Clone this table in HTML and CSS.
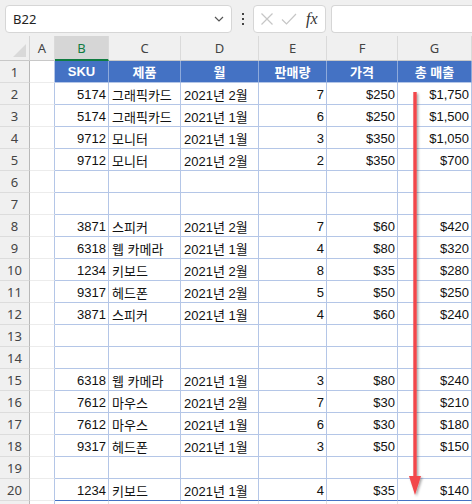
FILE: index.html
```html
<!DOCTYPE html>
<html lang="ko">
<head>
<meta charset="utf-8">
<link rel="stylesheet" href="styles.css">
</head>
<body>
<div class="app">
  <div class="toolbar">
    <div class="namebox">
      <span class="name">B22</span>
      <svg class="chev" width="10" height="6" viewBox="0 0 10 6"><path d="M1 1l4 4 4-4" fill="none" stroke="#555" stroke-width="1.2"/></svg>
    </div>
    <div class="dots"><i></i><i></i><i></i></div>
    <div class="fxbox">
      <svg width="14" height="14" viewBox="0 0 14 14"><path d="M1.5 1.5l11 11M12.5 1.5l-11 11" stroke="#c6c6c6" stroke-width="1.2"/></svg>
      <svg width="16" height="14" viewBox="0 0 16 14"><path d="M1 7.5l4.5 4.5L15 2" fill="none" stroke="#c6c6c6" stroke-width="1.2"/></svg>
      <span class="fx">fx</span>
    </div>
    <div class="formula"></div>
  </div>

  <div class="sheet">
    <div class="grid">
      <div class="corner"><span class="tri"></span></div>
      <div class="ch">A</div><div class="ch sel">B</div><div class="ch">C</div><div class="ch">D</div><div class="ch">E</div><div class="ch">F</div><div class="ch">G</div>

      <div class="rh">1</div><div class="a"></div>
      <div class="th">SKU</div><div class="th">제품</div><div class="th">월</div><div class="th">판매량</div><div class="th">가격</div><div class="th">총 매출</div>

      <div class="rh">2</div><div class="a"></div>
      <div class="c n">5174</div><div class="c t">그래픽카드</div><div class="c t">2021년 2월</div><div class="c n">7</div><div class="c n">$250</div><div class="c n">$1,750</div>

      <div class="rh">3</div><div class="a"></div>
      <div class="c n">5174</div><div class="c t">그래픽카드</div><div class="c t">2021년 1월</div><div class="c n">6</div><div class="c n">$250</div><div class="c n">$1,500</div>

      <div class="rh">4</div><div class="a"></div>
      <div class="c n">9712</div><div class="c t">모니터</div><div class="c t">2021년 1월</div><div class="c n">3</div><div class="c n">$350</div><div class="c n">$1,050</div>

      <div class="rh">5</div><div class="a"></div>
      <div class="c n">9712</div><div class="c t">모니터</div><div class="c t">2021년 2월</div><div class="c n">2</div><div class="c n">$350</div><div class="c n">$700</div>

      <div class="rh">6</div><div class="a"></div>
      <div class="c"></div><div class="c"></div><div class="c"></div><div class="c"></div><div class="c"></div><div class="c"></div>

      <div class="rh">7</div><div class="a"></div>
      <div class="c"></div><div class="c"></div><div class="c"></div><div class="c"></div><div class="c"></div><div class="c"></div>

      <div class="rh">8</div><div class="a"></div>
      <div class="c n">3871</div><div class="c t">스피커</div><div class="c t">2021년 2월</div><div class="c n">7</div><div class="c n">$60</div><div class="c n">$420</div>

      <div class="rh">9</div><div class="a"></div>
      <div class="c n">6318</div><div class="c t">웹 카메라</div><div class="c t">2021년 1월</div><div class="c n">4</div><div class="c n">$80</div><div class="c n">$320</div>

      <div class="rh">10</div><div class="a"></div>
      <div class="c n">1234</div><div class="c t">키보드</div><div class="c t">2021년 2월</div><div class="c n">8</div><div class="c n">$35</div><div class="c n">$280</div>

      <div class="rh">11</div><div class="a"></div>
      <div class="c n">9317</div><div class="c t">헤드폰</div><div class="c t">2021년 2월</div><div class="c n">5</div><div class="c n">$50</div><div class="c n">$250</div>

      <div class="rh">12</div><div class="a"></div>
      <div class="c n">3871</div><div class="c t">스피커</div><div class="c t">2021년 1월</div><div class="c n">4</div><div class="c n">$60</div><div class="c n">$240</div>

      <div class="rh">13</div><div class="a"></div>
      <div class="c"></div><div class="c"></div><div class="c"></div><div class="c"></div><div class="c"></div><div class="c"></div>

      <div class="rh">14</div><div class="a"></div>
      <div class="c"></div><div class="c"></div><div class="c"></div><div class="c"></div><div class="c"></div><div class="c"></div>

      <div class="rh">15</div><div class="a"></div>
      <div class="c n">6318</div><div class="c t">웹 카메라</div><div class="c t">2021년 1월</div><div class="c n">3</div><div class="c n">$80</div><div class="c n">$240</div>

      <div class="rh">16</div><div class="a"></div>
      <div class="c n">7612</div><div class="c t">마우스</div><div class="c t">2021년 2월</div><div class="c n">7</div><div class="c n">$30</div><div class="c n">$210</div>

      <div class="rh">17</div><div class="a"></div>
      <div class="c n">7612</div><div class="c t">마우스</div><div class="c t">2021년 1월</div><div class="c n">6</div><div class="c n">$30</div><div class="c n">$180</div>

      <div class="rh">18</div><div class="a"></div>
      <div class="c n">9317</div><div class="c t">헤드폰</div><div class="c t">2021년 1월</div><div class="c n">3</div><div class="c n">$50</div><div class="c n">$150</div>

      <div class="rh">19</div><div class="a"></div>
      <div class="c"></div><div class="c"></div><div class="c"></div><div class="c"></div><div class="c"></div><div class="c"></div>

      <div class="rh">20</div><div class="a"></div>
      <div class="c n last">1234</div><div class="c t last">키보드</div><div class="c t last">2021년 1월</div><div class="c n last">4</div><div class="c n last">$35</div><div class="c n last">$140</div>

      <div class="rh"></div><div class="a"></div>
      <div class="c e"></div><div class="c e"></div><div class="c e"></div><div class="c e"></div><div class="c e"></div><div class="c e"></div>
    </div>

    <svg class="arrow" width="30" height="420" viewBox="0 0 30 420">
      <defs>
        <filter id="sh" x="-50%" y="-5%" width="200%" height="110%">
          <feDropShadow dx="1.5" dy="1.5" stdDeviation="1.2" flood-color="#000" flood-opacity="0.35"/>
        </filter>
      </defs>
      <g filter="url(#sh)">
        <rect x="13.3" y="2" width="3.4" height="386" fill="#f2474b"/>
        <polygon points="9,386 21,386 15,405" fill="#f2474b"/>
      </g>
    </svg>
  </div>
</div>
</body>
</html>
```

FILE: styles.css
```css
* { box-sizing: border-box; }
html, body { margin: 0; padding: 0; }
body {
  width: 472px;
  height: 504px;
  overflow: hidden;
  background: #fff;
  font-family: "Liberation Sans", "Noto Sans CJK KR", sans-serif;
}
.app { width: 472px; height: 504px; overflow: hidden; }

.toolbar {
  height: 36px;
  background: #f0f0f0;
  display: flex;
  align-items: flex-start;
  padding: 5px 0 0 5px;
}
.namebox {
  width: 227px;
  height: 28px;
  background: #fff;
  border: 1px solid #d6d6d6;
  border-radius: 4px;
  display: flex;
  align-items: center;
  justify-content: space-between;
  padding: 0 7px 0 7px;
}
.name { font-family: "Noto Sans", "Liberation Sans", sans-serif; font-size: 13px; color: #222; }
.chev { margin-right: 0; }
.dots {
  width: 21px;
  height: 28px;
  display: flex;
  flex-direction: column;
  align-items: center;
  justify-content: center;
  gap: 3px;
}
.dots i { display: block; width: 2px; height: 2px; background: #444; }
.fxbox {
  width: 73px;
  height: 28px;
  background: #fff;
  border: 1px solid #d6d6d6;
  border-radius: 4px;
  display: flex;
  align-items: center;
  padding: 0 0 0 6px;
  gap: 7px;
}
.fx {
  font-family: "Liberation Serif", serif;
  font-style: italic;
  font-size: 16px;
  color: #333;
  margin-left: 2px;
}
.formula {
  flex: 1;
  height: 28px;
  margin-left: 5px;
  background: #fff;
  border: 1px solid #d6d6d6;
  border-right: none;
  border-radius: 4px 0 0 4px;
}

.sheet { position: relative; }
.grid {
  display: grid;
  grid-template-columns: 30px 25px 54px 72px 78px 68px 71px 74px;
  grid-template-rows: 25px repeat(21, 22px);
  font-size: 13px;
}
.corner {
  background: #f0f0f0;
  border-right: 1px solid #d4d4d4;
  border-bottom: 1px solid #c8c8c8;
  position: relative;
}
.tri {
  position: absolute;
  right: 3px;
  bottom: 3px;
  width: 0;
  height: 0;
  border-left: 13px solid transparent;
  border-bottom: 13px solid #d9d9d9;
}
.ch {
  background: #f0f0f0;
  border-right: 1px solid #dadada;
  border-bottom: 1px solid #c8c8c8;
  color: #444;
  display: flex;
  align-items: center;
  justify-content: center;
  font-family: "Noto Sans", "Liberation Sans", sans-serif;
  font-size: 13px;
}
.ch.sel {
  background: #d6d6d6;
  color: #107c41;
  border-bottom: 2px solid #107c41;
}
.rh {
  background: #f0f0f0;
  border-right: 1px solid #b8b8b8;
  border-bottom: 1px solid #dcdcdc;
  color: #444;
  display: flex;
  align-items: center;
  justify-content: center;
  font-family: "Noto Sans", "Liberation Sans", sans-serif;
  font-size: 13px;
  padding-top: 1px;
}
.a {
  background: #fff;
  border-right: 1px solid #b4c6e7;
  border-bottom: 1px solid #ececec;
}
.th {
  background: #4472c4;
  color: #fff;
  font-weight: bold;
  border-right: 1px solid #8eaadb;
  border-bottom: 1px solid #b4c6e7;
  display: flex;
  align-items: center;
  justify-content: center;
}
.c {
  background: #fff;
  color: #111;
  border-right: 1px solid #b4c6e7;
  border-bottom: 1px solid #b4c6e7;
  display: flex;
  align-items: center;
  white-space: nowrap;
  overflow: hidden;
  padding-top: 1px;
}
.n { justify-content: flex-end; padding-right: 2px; }
.t { justify-content: flex-start; padding-left: 3px; }
.c.last { border-bottom: 1px solid #4472c4; }
.c.e { border-right: 1px solid #e0e0e0; border-bottom: none; }

.arrow {
  position: absolute;
  left: 400px;
  top: 54px;
}
```
